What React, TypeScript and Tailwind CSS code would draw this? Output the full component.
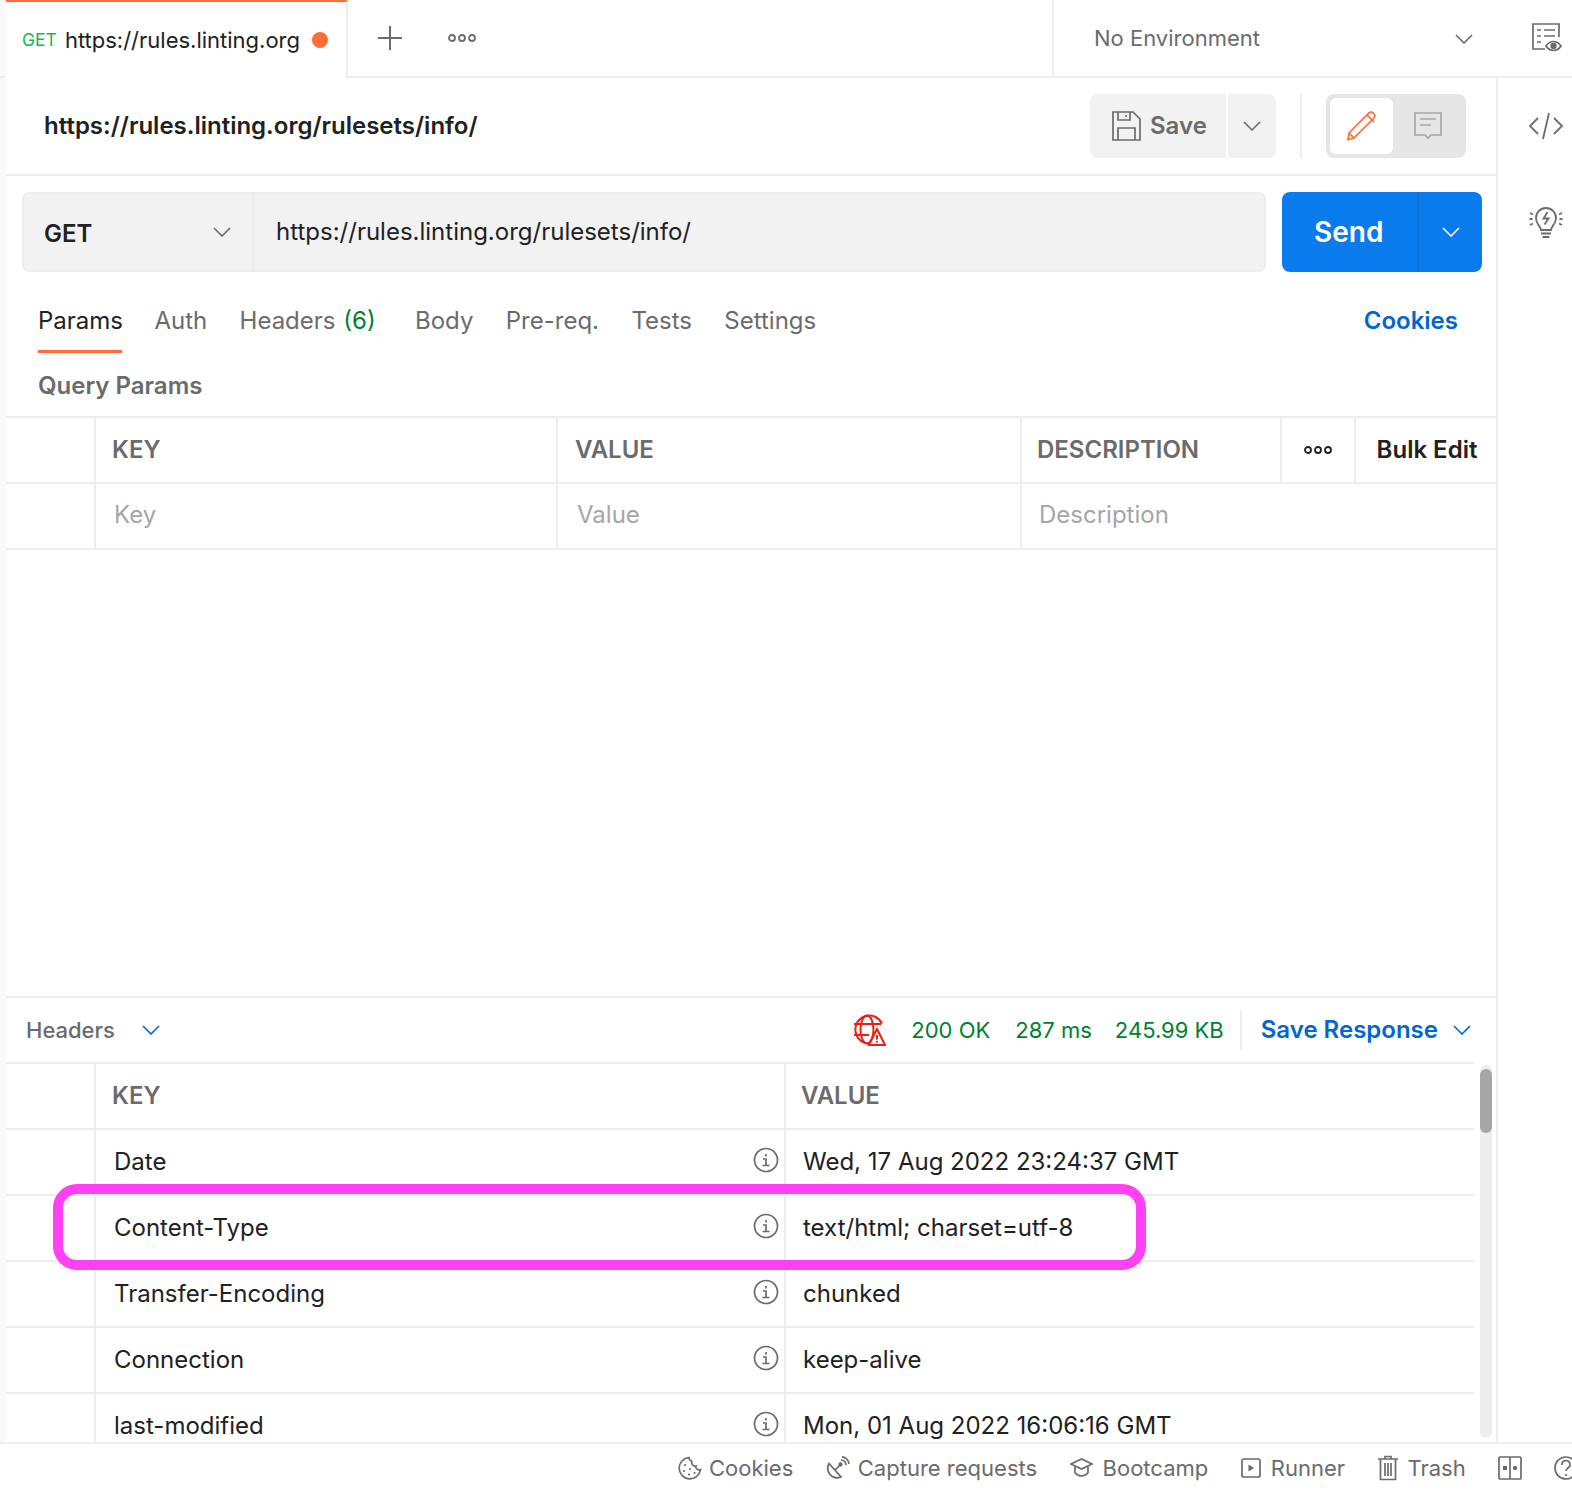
import React from 'react';

const Chevron = ({ className = 'text-[#6b6b6b]' }: { className?: string }) => (
  <svg width="18" height="10" viewBox="0 0 18 10" fill="none" stroke="currentColor" strokeWidth="1.6" className={className}>
    <path d="M1 1l8 8 8-8" />
  </svg>
);

const Dots = ({ color = '#6b6b6b' }: { color?: string }) => (
  <svg width="30" height="10" viewBox="0 0 30 10" fill="none" stroke={color} strokeWidth="1.8">
    <circle cx="5" cy="5" r="3" />
    <circle cx="15" cy="5" r="3" />
    <circle cx="25" cy="5" r="3" />
  </svg>
);

const InfoIcon = () => (
  <svg width="26" height="26" viewBox="0 0 26 26" fill="none" stroke="#6b6b6b" strokeWidth="1.7">
    <circle cx="13" cy="13" r="11.500" />
    <path d="M13 7v2.500M10 12h3v6.500M9.500 18.500h7" />
  </svg>
);

const FooterItem = ({ icon, label, gap = 'gap-[9px]' }: { icon: React.ReactNode; label: string; gap?: string }) => (
  <div className={`flex items-center ${gap}`}>
    {icon}
    <span>{label}</span>
  </div>
);

const paramCols = 'w-[90px]';

const responseRows = [
  ['Date', 'Wed, 17 Aug 2022 23:24:37 GMT'],
  ['Content-Type', 'text/html; charset=utf-8'],
  ['Transfer-Encoding', 'chunked'],
  ['Connection', 'keep-alive'],
  ['last-modified', 'Mon, 01 Aug 2022 16:06:16 GMT'],
];

const App: React.FC = () => {
  return (
    <div className="relative flex h-[1492px] w-[1572px] flex-col overflow-hidden bg-white font-['Inter',sans-serif] text-[24px] text-[#212121]">
      {/* Tab bar */}
      <div className="flex h-[78px] shrink-0 border-b-2 border-[#ededed]">
        <div className="w-[6px] shrink-0 bg-[#f9f9f9]" />
        <div className="-mb-[2px] flex h-[78px] w-[342px] items-center border-r-2 border-t-2 border-r-[#ededed] border-t-[#ff6c37] bg-white pl-[16px] text-[22px]">
          <span className="mr-[8px] text-[17.5px] text-[#0cbb52]">GET</span>
          <span>https://rules.linting.org</span>
          <span className="ml-[12px] h-[16px] w-[16px] rounded-full bg-[#ff6c37]" />
        </div>
        <div className="flex items-center pl-[30px]">
          <svg width="24" height="24" viewBox="0 0 24 24" stroke="#6b6b6b" strokeWidth="2">
            <path d="M12 0v24M0 12h24" />
          </svg>
          <div className="ml-[45px]"><Dots /></div>
        </div>
        <div className="ml-[575px] flex w-[444px] items-center border-l-2 border-[#ededed] pl-[40px] pt-[1px] text-[22px] text-[#6b6b6b]">
          <span className="w-[361px]">No Environment</span>
          <Chevron />
        </div>
        <div className="ml-[36px] flex items-center">
          <svg width="30" height="30" viewBox="0 0 30 30" fill="none" stroke="#6b6b6b" strokeWidth="1.7">
            <path d="M13 26H1V1h26v13" />
            <path d="M5 7h4M12 7h11M5 13h4M12 13h11M5 19h4" />
            <path d="M14 23c2-3 4.500-4.500 7.500-4.500s5.500 1.500 7.500 4.500c-2 3-4.500 4.500-7.500 4.500S16 26 14 23z" />
            <circle cx="21.500" cy="23" r="2.300" fill="#6b6b6b" />
          </svg>
        </div>
      </div>

      <div className="flex min-h-0 flex-1">
        <div className="w-[6px] shrink-0 bg-[#f9f9f9]" />
        <div className="flex w-[1492px] shrink-0 flex-col border-r-2 border-[#ededed]">
          {/* Title row */}
          <div className="flex h-[98px] shrink-0 items-center border-b-2 border-[#ededed] pl-[38px] pr-[30px]">
            <span className="flex-1 font-semibold">https://rules.linting.org/rulesets/info/</span>
            <div className="flex h-[64px] w-[136px] items-center gap-[9px] rounded-l-[8px] bg-[#f2f2f2] pl-[21px] font-semibold text-[#6b6b6b]">
              <svg width="30" height="30" viewBox="0 0 30 30" fill="none" stroke="#6b6b6b" strokeWidth="1.7">
                <path d="M2 1h20l7 7v21H2z" />
                <path d="M7 1v8h12V1M15 4v2M7 29V17h17v12" />
              </svg>
              <span>Save</span>
            </div>
            <div className="ml-[2px] flex h-[64px] w-[48px] items-center justify-center rounded-r-[8px] bg-[#f2f2f2]">
              <Chevron />
            </div>
            <div className="ml-[24px] h-[64px] w-[2px] bg-[#ededed]" />
            <div className="ml-[24px] flex h-[64px] w-[140px] rounded-[8px] bg-[#e6e6e6] p-[4px]">
              <div className="flex h-[56px] w-[63px] items-center justify-center rounded-[6px] bg-white">
                <svg width="30" height="30" viewBox="0 0 30 30" fill="none" stroke="#ff6c37" strokeWidth="1.7">
                  <path d="M2 22L22 2c1.500-1.200 3-1 4.500.3s1.800 3 .5 4.700L7 27l-6 1.500z" />
                  <path d="M20 4l7 7M2 22l5 5" />
                </svg>
              </div>
              <div className="flex flex-1 items-center justify-center">
                <svg width="30" height="30" viewBox="0 0 30 30" fill="none" stroke="#a6a6a6" strokeWidth="1.7">
                  <path d="M2 2h26v22H18l-3 3-3-3H2z" />
                  <path d="M7 8h16M7 14h11" />
                </svg>
              </div>
            </div>
          </div>

          {/* Request row */}
          <div className="flex shrink-0 pl-[16px] pr-[14px] pt-[16px]">
            <div className="flex h-[80px] w-[1246px] rounded-[8px] border-2 border-[#ededed] bg-[#f2f2f2]">
              <div className="flex w-[230px] items-center border-r-2 border-[#ededed] pl-[20px] font-semibold">
                <span className="flex-1 pt-[4px]">GET</span>
                <span className="mr-[21px]"><Chevron /></span>
              </div>
              <div className="flex items-center pl-[22px] pb-[1px]">https://rules.linting.org/rulesets/info/</div>
            </div>
            <div className="ml-[16px] flex h-[80px] w-[200px] rounded-[8px] bg-[#097bed] text-white">
              <div className="flex w-[137px] items-center justify-center border-r-2 border-[#0a6fd4] pr-[2px] text-[28px] font-semibold">Send</div>
              <div className="flex flex-1 items-center justify-center">
                <Chevron className="text-white" />
              </div>
            </div>
          </div>

          {/* Tabs */}
          <div className="flex h-[81px] shrink-0 items-start gap-[32.4px] pl-[32px] pr-[38px] pt-[31px] text-[#6b6b6b]">
            <div className="w-[84px] border-b-[3px] border-[#ff6c37] pb-[11px] text-[#212121]">Params</div>
            <span>Auth</span>
            <span className="w-[143px]">Headers <span className="ml-[1px] text-[#007f31]">(6)</span></span>
            <span>Body</span>
            <span>Pre-req.</span>
            <span>Tests</span>
            <span>Settings</span>
            <span className="ml-auto font-semibold text-[#0265d2]">Cookies</span>
          </div>

          <div className="flex h-[63px] shrink-0 items-center pt-[3px] pl-[32px] font-semibold text-[#6b6b6b]">Query Params</div>

          {/* Query params table */}
          <div className="flex h-[68px] shrink-0 border-y-2 border-[#ededed] font-semibold text-[#6b6b6b]">
            <div className={`${paramCols} shrink-0 border-r-2 border-[#ededed]`} />
            <div className="flex w-[462px] items-center border-r-2 border-[#ededed] pl-[16px]">KEY</div>
            <div className="flex w-[464px] items-center border-r-2 border-[#ededed] pl-[17px]">VALUE</div>
            <div className="flex w-[260px] items-center border-r-2 border-[#ededed] pl-[15px]">DESCRIPTION</div>
            <div className="flex w-[74px] items-center justify-center border-r-2 border-[#ededed]"><Dots color="#212121" /></div>
            <div className="flex flex-1 items-center justify-center pl-[2px] text-[#212121]">Bulk Edit</div>
          </div>
          <div className="flex h-[66px] shrink-0 border-b-2 border-[#ededed] text-[#a6a6a6]">
            <div className={`${paramCols} shrink-0 border-r-2 border-[#ededed]`} />
            <div className="flex w-[462px] items-center border-r-2 border-[#ededed] pb-[3px] pl-[18px]">Key</div>
            <div className="flex w-[464px] items-center border-r-2 border-[#ededed] pb-[3px] pl-[19px]">Value</div>
            <div className="flex flex-1 items-center pb-[3px] pl-[17px]">Description</div>
          </div>

          <div className="flex-1" />

          {/* Response */}
          <div className="flex h-[66px] shrink-0 items-center border-t-2 border-[#ededed] pl-[20px] pr-[25px] text-[22px]">
            <span className="font-medium text-[#6b6b6b]">Headers</span>
            <span className="ml-[27px]"><Chevron className="text-[#0265d2]" /></span>
            <svg className="ml-auto" width="34" height="32" viewBox="0 0 34 32" fill="none" stroke="#eb2013" strokeWidth="2">
              <path d="M17 29.500a14 14 0 1 1 13-20" />
              <ellipse cx="15" cy="15.500" rx="6.500" ry="14" />
              <path d="M2 10h27M2 21h15" />
              <path d="M25 15l8 16H17z" fill="#fff" />
              <path d="M25 21v4.500M25 27v1.500" />
            </svg>
            <span className="ml-[25px] text-[#007f31]">200 OK</span>
            <span className="ml-[25px] text-[#007f31]">287 ms</span>
            <span className="ml-[23px] text-[#007f31]">245.99 KB</span>
            <div className="ml-[16px] h-[40px] w-[2px] bg-[#ededed]" />
            <span className="ml-[19px] text-[24px] font-semibold text-[#0265d2]">Save Response</span>
            <span className="ml-[15px]"><Chevron className="text-[#0265d2]" /></span>
          </div>

          <div className="relative mr-[22px] min-h-0 h-[380px] flex-none overflow-hidden border-t-2 border-[#ededed]">
            <div className="flex h-[66px] border-b-2 border-[#ededed] font-semibold text-[#6b6b6b]">
              <div className={`${paramCols} shrink-0 border-r-2 border-[#ededed]`} />
              <div className="flex w-[690px] items-center border-r-2 border-[#ededed] pl-[16px]">KEY</div>
              <div className="flex flex-1 items-center pl-[15px]">VALUE</div>
            </div>
            {responseRows.map(([k, v]) => (
              <div key={k} className="flex h-[66px] border-b-2 border-[#ededed]">
                <div className={`${paramCols} shrink-0 border-r-2 border-[#ededed]`} />
                <div className="flex w-[690px] items-center justify-between border-r-2 border-[#ededed] pl-[18px] pr-[5px]">
                  <span>{k}</span>
                  <span className="mb-[4px]"><InfoIcon /></span>
                </div>
                <div className="flex flex-1 items-center pl-[17px]">{v}</div>
              </div>
            ))}
          </div>
        </div>

        {/* Right rail */}
        <div className="flex flex-1 flex-col gap-[64px] pl-[31px] pt-[34px]">
          <svg className="shrink-0" width="34" height="28" viewBox="0 0 34 28" fill="none" stroke="#6b6b6b" strokeWidth="1.8">
            <path d="M9 6l-8 8 8 8M25 6l8 8-8 8M20 1l-6 26" />
          </svg>
          <svg className="shrink-0" width="34" height="36" viewBox="0 0 34 36" fill="none" stroke="#6b6b6b" strokeWidth="1.8">
            <path d="M12 26c0-3.500-5-5.500-5-12a10 10 0 0 1 20 0c0 6.500-5 8.500-5 12z" />
            <path d="M18.500 8l-4 6.500h5l-4 6" />
            <path d="M12 29.500h10M13.500 33h7M1 9l3 1.500M0.500 15h3M1 21l3-1.500M33 9l-3 1.500M33.500 15h-3M33 21l-3-1.500" />
          </svg>
        </div>

        {/* Scrollbar */}
        <div className="absolute left-[1480px] top-[1065px] h-[373px] w-[12px] rounded-full bg-[#ededed]">
          <div className="mt-[4px] h-[64px] w-[12px] rounded-full bg-[#a6a6a6]" />
        </div>
      </div>

      {/* Footer */}
      <div className="flex h-[50px] shrink-0 items-center gap-[32.5px] whitespace-nowrap border-t-2 border-[#ededed] pl-[678px] text-[22px] text-[#6b6b6b]">
        <FooterItem
          label="Cookies"
          gap="gap-[7px]"
          icon={
            <svg width="24" height="24" viewBox="0 0 24 24" fill="none" stroke="#6b6b6b" strokeWidth="1.700">
              <path d="M11 1.500a10.700 10.700 0 1 0 11.500 12c-1 .5-2.500.5-3.500-.5-1-.5-1.500-2-1-3-1.500.5-3.500-.5-4-2-.5-1 0-2-.5-3-1.500-.5-2.500-2-2.500-3.500z" />
              <circle cx="7" cy="9" r="1.100" fill="#6b6b6b" stroke="none" />
              <circle cx="6" cy="15" r="1.100" fill="#6b6b6b" stroke="none" />
              <circle cx="12" cy="13" r="1.100" fill="#6b6b6b" stroke="none" />
              <circle cx="11" cy="18.500" r="1.100" fill="#6b6b6b" stroke="none" />
              <circle cx="16.500" cy="17" r="1.100" fill="#6b6b6b" stroke="none" />
            </svg>
          }
        />
        <FooterItem
          label="Capture requests"
          gap="gap-[8px]"
          icon={
            <svg width="24" height="24" viewBox="0 0 24 24" fill="none" stroke="#6b6b6b" strokeWidth="1.700">
              <path d="M3 7.500c-2 4-1.500 8 1 11s7 4 11 2.500z" />
              <path d="M9 14l5-5" />
              <circle cx="14.500" cy="8.500" r="1.300" fill="#6b6b6b" />
              <path d="M15 4a5 5 0 0 1 5 5M16 .8a8 8 0 0 1 7 7" />
            </svg>
          }
        />
        <FooterItem
          label="Bootcamp"
          gap="gap-[10px]"
          icon={
            <svg width="23" height="22" viewBox="0 0 23 22" fill="none" stroke="#6b6b6b" strokeWidth="1.700">
              <path d="M1 7l10.500-5L22 7l-10.500 5z" />
              <path d="M5 9.500v6c3 4.500 10 4.500 13 0v-6" />
            </svg>
          }
        />
        <FooterItem
          label="Runner"
          gap="gap-[10px]"
          icon={
            <svg width="20" height="22" viewBox="0 0 20 22" fill="none" stroke="#6b6b6b" strokeWidth="1.700">
              <rect x="1" y="2" width="18" height="18" rx="2" />
              <path d="M7.500 7.500l5.500 3.500-5.500 3.500z" fill="#6b6b6b" stroke="none" />
            </svg>
          }
        />
        <FooterItem
          label="Trash"
          gap="gap-[10px]"
          icon={
            <svg width="20" height="26" viewBox="0 0 20 26" fill="none" stroke="#6b6b6b" strokeWidth="1.700">
              <path d="M0 4h20M7 4V1.500h6V4M2.500 4v20.500h15V4M7 8v13M10 8v13M13 8v13" />
            </svg>
          }
        />
        <svg className="shrink-0" width="24" height="24" viewBox="0 0 24 24" fill="none" stroke="#6b6b6b" strokeWidth="1.700">
          <rect x="1" y="1" width="22" height="22" rx="1" />
          <path d="M12 1v22" />
          <rect x="5" y="10" width="4" height="4" fill="#6b6b6b" stroke="none" />
          <circle cx="17" cy="12" r="2.200" fill="#6b6b6b" stroke="none" />
        </svg>
        <svg className="-ml-[1px] shrink-0" width="24" height="24" viewBox="0 0 24 24" fill="none" stroke="#6b6b6b" strokeWidth="1.700">
          <circle cx="12" cy="12" r="11" />
          <path d="M8 9a4 4 0 1 1 6 3c-1.500 1-2 2-2 3M12 18v2" />
        </svg>
      </div>

      {/* Annotation */}
      <div className="absolute left-[53px] top-[1184px] h-[86px] w-[1093px] rounded-[24px] border-[10px] border-[#ff40f5]" />
    </div>
  );
};

export default App;
